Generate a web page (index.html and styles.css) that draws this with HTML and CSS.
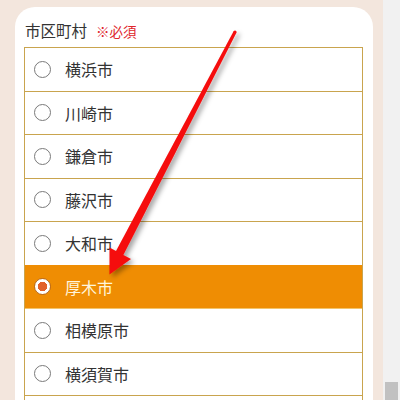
FILE: index.html
```html
<!DOCTYPE html>
<html lang="ja">
<head>
<meta charset="utf-8">
<link rel="stylesheet" href="styles.css">
</head>
<body>
<div class="page">
  <div class="main">
    <div class="card">
      <div class="label">市区町村<span class="req">※必須</span></div>
      <div class="list">
        <div class="row"><span class="radio"></span><span class="name">横浜市</span></div>
        <div class="row"><span class="radio"></span><span class="name">川崎市</span></div>
        <div class="row"><span class="radio"></span><span class="name">鎌倉市</span></div>
        <div class="row"><span class="radio"></span><span class="name">藤沢市</span></div>
        <div class="row"><span class="radio"></span><span class="name">大和市</span></div>
        <div class="row selected"><span class="radio"></span><span class="name">厚木市</span></div>
        <div class="row"><span class="radio"></span><span class="name">相模原市</span></div>
        <div class="row"><span class="radio"></span><span class="name">横須賀市</span></div>
        <div class="row"></div>
      </div>
    </div>
  </div>
  <div class="scroll"><div class="thumb"></div></div>
  <svg class="arrow" width="400" height="400" viewBox="0 0 400 400">
    <defs>
      <filter id="sh" x="-20%" y="-20%" width="140%" height="140%">
        <feDropShadow dx="3" dy="3" stdDeviation="2.5" flood-color="#000" flood-opacity="0.35"/>
      </filter>
    </defs>
    <g filter="url(#sh)">
      <polygon fill="#f50d0d" points="236.4,32.8 233.6,31.2 116.0,251.0 109.5,247.5 109.5,274.5 131,259 123.4,254.9"/>
      <circle cx="235" cy="32" r="1.6" fill="#f50d0d"/>
    </g>
  </svg>
</div>
</body>
</html>
```

FILE: styles.css
```css
html, body {
  margin: 0;
  padding: 0;
}
body {
  font-family: "Noto Sans CJK JP", "Noto Sans", sans-serif;
  color: #333;
}
.page {
  position: relative;
  width: 400px;
  height: 400px;
  overflow: hidden;
  display: flex;
}
.main {
  width: 383px;
  box-sizing: border-box;
  background: #f3e6dd;
  padding: 7px 10px 0 15px;
  display: flex;
  flex-direction: column;
}
.card {
  flex: 1;
  background: #fff;
  border-radius: 20px 20px 0 0;
  padding: 12px 10px 0 9px;
}
.label {
  font-size: 15.5px;
  line-height: 22px;
  padding-left: 1px;
  margin-bottom: 5px;
  color: #333;
}
.req {
  font-size: 13.5px;
  color: #e0262b;
  margin-left: 9px;
}
.list {
  border-left: 1px solid #c9a44e;
  border-right: 1px solid #c9a44e;
}
.row {
  height: 42.5px;
  border-top: 1px solid #c9a44e;
  display: flex;
  align-items: center;
  padding-left: 9px;
  gap: 14px;
  font-size: 16px;
  background: #fff;
}
.radio {
  width: 15px;
  height: 15px;
  border: 1px solid #7a7a7a;
  border-radius: 50%;
  background: #fff;
  flex: none;
}
.selected {
  background: #ef8d03;
  border-top-color: #ef8d03;
  color: #fff6db;
}
.selected .radio {
  border: 1px solid #b86a20;
  background: radial-gradient(circle, #e2622b 0 4.5px, #fff 5px);
}
.selected + .row {
  border-top-color: #f3c46a;
}
.scroll {
  width: 17px;
  background: #f1f1f1;
  display: flex;
  flex-direction: column;
  justify-content: flex-end;
  padding: 0 2px 0 2px;
  box-sizing: border-box;
}
.thumb {
  height: 18px;
  background: #c1c1c1;
}
.arrow {
  position: absolute;
  left: 0;
  top: 0;
  pointer-events: none;
}
```
